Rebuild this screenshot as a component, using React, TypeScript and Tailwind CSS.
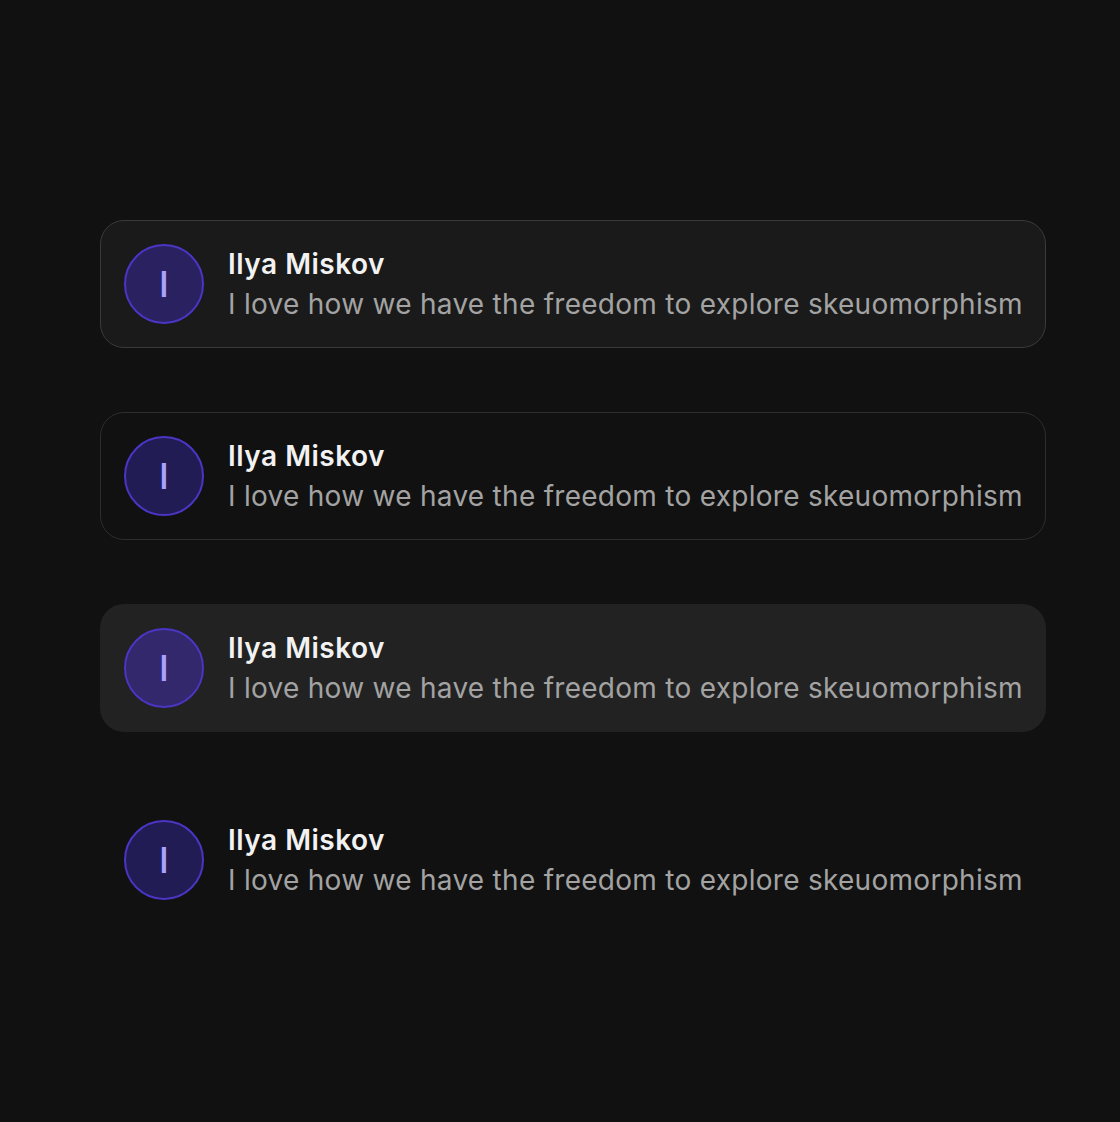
const variants = [
  'border border-[#3a3a3a] bg-[#1a1a1a]',
  'border border-[#2d2d2d] bg-[#111111]',
  'border border-transparent bg-[#222222]',
  'border border-transparent bg-transparent',
];

const avatarFills = ['bg-[#2a2260]', 'bg-[#221c55]', 'bg-[#32286b]', 'bg-[#221c55]'];

function Comment({ variant, fill }: { variant: string; fill: string }) {
  return (
    <div className={`flex w-[946px] items-center gap-6 rounded-3xl p-[23px] ${variant}`}>
      <div
        className={`flex h-20 w-20 shrink-0 items-center justify-center rounded-full border-2 border-[#4a35c4] ${fill}`}
      >
        <span className="text-[36px] font-medium leading-none text-[#aaa2ff]">I</span>
      </div>
      <div className="flex flex-col whitespace-nowrap">
        <span className="text-[28px] font-semibold leading-10 tracking-[0.5px] text-[#f2f2f2]">Ilya Miskov</span>
        <span className="text-[28px] leading-10 tracking-[0.28px] text-[#a3a3a3]">
          I love how we have the freedom to explore skeuomorphism
        </span>
      </div>
    </div>
  );
}

export default function App() {
  return (
    <div
      className="flex min-h-[1122px] flex-col gap-16 bg-[#111111] px-[100px] pt-[220px]"
      style={{ fontFamily: 'Inter, "Noto Sans", sans-serif' }}
    >
      {variants.map((v, i) => (
        <Comment key={i} variant={v} fill={avatarFills[i]} />
      ))}
    </div>
  );
}
